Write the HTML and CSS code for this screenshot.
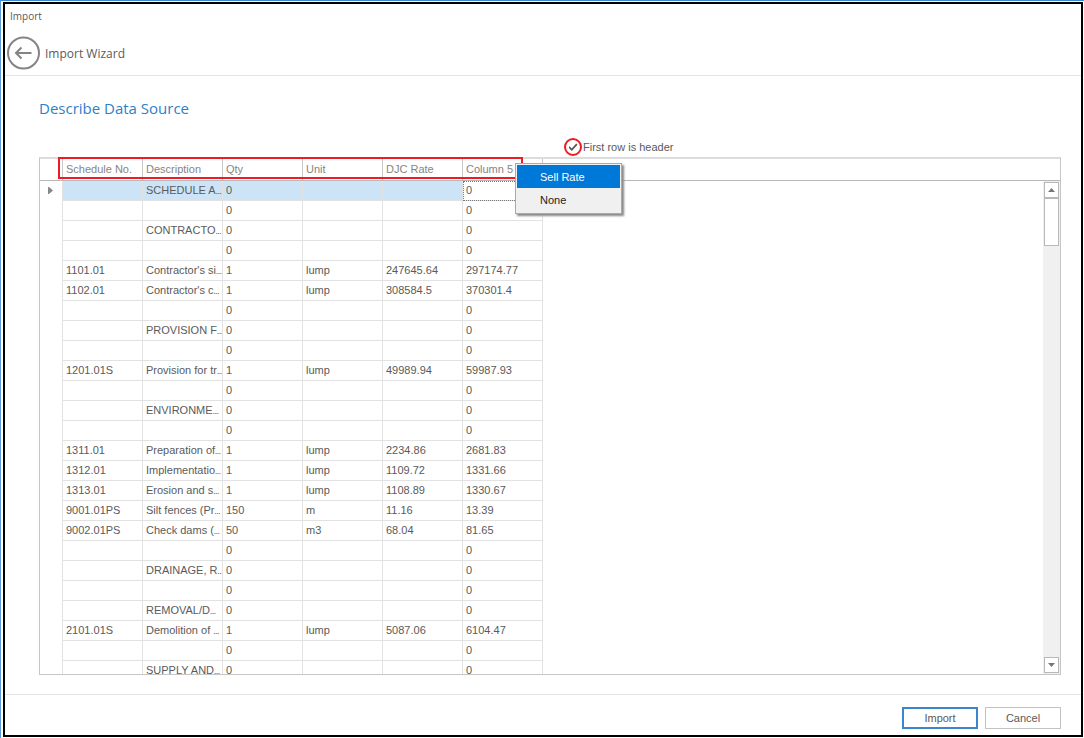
FILE: index.html
```html
<!DOCTYPE html>
<html lang="en">

<head>
    <meta charset="UTF-8" />
    <meta name="viewport" content="width=device-width, initial-scale=1" />
    <title>Import</title>
    <link rel="stylesheet" href="styles.css">
</head>

<body>
    <div class="dialog">
        <header class="titlebar">
            <div class="window-title">Import</div>
            <div class="wizard-bar">
                <button class="back" type="button" aria-label="Back">
                    <svg width="34" height="34" viewBox="0 0 34 34" fill="none" stroke="#848484">
                        <circle cx="16.5" cy="17" r="15.5" stroke-width="2" />
                        <path d="M24.5 17H9.5M14.5 11.5L9 17L14.5 22.5" stroke-width="2" />
                    </svg>
                </button>
                <span class="wizard-name">Import Wizard</span>
            </div>
        </header>

        <main class="content">
            <h1>Describe Data Source</h1>

            <div class="options">
                <span class="check-ring"><input type="checkbox" id="first-row" checked></span>
                <label for="first-row">First row is header</label>
            </div>

            <div class="grid">
                <table>
                    <colgroup>
                        <col class="col-mark">
                        <col class="col-data">
                        <col class="col-data">
                        <col class="col-data">
                        <col class="col-data">
                        <col class="col-data">
                        <col class="col-data">
                        <col>
                    </colgroup>
                    <thead>
                        <tr><th></th><th>Schedule No.</th><th>Description</th><th>Qty</th><th>Unit</th><th>DJC Rate</th><th>Column 5</th><th></th></tr>
                    </thead>
                    <tbody>
                        <tr class="selected"><td><svg class="marker" width="5" height="7" viewBox="0 0 5 7"><path d="M0 0H1L5 3.5L1 7H0Z" fill="#888" /></svg></td><td></td><td class="cut">SCHEDULE A</td><td>0</td><td></td><td></td><td class="focused">0</td><td></td></tr>
                        <tr><td></td><td></td><td></td><td>0</td><td></td><td></td><td>0</td><td></td></tr>
                        <tr><td></td><td></td><td class="cut">CONTRACTO</td><td>0</td><td></td><td></td><td>0</td><td></td></tr>
                        <tr><td></td><td></td><td></td><td>0</td><td></td><td></td><td>0</td><td></td></tr>
                        <tr><td></td><td>1101.01</td><td class="cut">Contractor's si</td><td>1</td><td>lump</td><td>247645.64</td><td>297174.77</td><td></td></tr>
                        <tr><td></td><td>1102.01</td><td class="cut">Contractor's c</td><td>1</td><td>lump</td><td>308584.5</td><td>370301.4</td><td></td></tr>
                        <tr><td></td><td></td><td></td><td>0</td><td></td><td></td><td>0</td><td></td></tr>
                        <tr><td></td><td></td><td class="cut">PROVISION F</td><td>0</td><td></td><td></td><td>0</td><td></td></tr>
                        <tr><td></td><td></td><td></td><td>0</td><td></td><td></td><td>0</td><td></td></tr>
                        <tr><td></td><td>1201.01S</td><td class="cut">Provision for tr</td><td>1</td><td>lump</td><td>49989.94</td><td>59987.93</td><td></td></tr>
                        <tr><td></td><td></td><td></td><td>0</td><td></td><td></td><td>0</td><td></td></tr>
                        <tr><td></td><td></td><td class="cut">ENVIRONME</td><td>0</td><td></td><td></td><td>0</td><td></td></tr>
                        <tr><td></td><td></td><td></td><td>0</td><td></td><td></td><td>0</td><td></td></tr>
                        <tr><td></td><td>1311.01</td><td class="cut">Preparation of</td><td>1</td><td>lump</td><td>2234.86</td><td>2681.83</td><td></td></tr>
                        <tr><td></td><td>1312.01</td><td class="cut">Implementatio</td><td>1</td><td>lump</td><td>1109.72</td><td>1331.66</td><td></td></tr>
                        <tr><td></td><td>1313.01</td><td class="cut">Erosion and s</td><td>1</td><td>lump</td><td>1108.89</td><td>1330.67</td><td></td></tr>
                        <tr><td></td><td>9001.01PS</td><td class="cut">Silt fences (Pr</td><td>150</td><td>m</td><td>11.16</td><td>13.39</td><td></td></tr>
                        <tr><td></td><td>9002.01PS</td><td class="cut">Check dams (</td><td>50</td><td>m3</td><td>68.04</td><td>81.65</td><td></td></tr>
                        <tr><td></td><td></td><td></td><td>0</td><td></td><td></td><td>0</td><td></td></tr>
                        <tr><td></td><td></td><td class="cut">DRAINAGE, R</td><td>0</td><td></td><td></td><td>0</td><td></td></tr>
                        <tr><td></td><td></td><td></td><td>0</td><td></td><td></td><td>0</td><td></td></tr>
                        <tr><td></td><td></td><td class="cut">REMOVAL/D</td><td>0</td><td></td><td></td><td>0</td><td></td></tr>
                        <tr><td></td><td>2101.01S</td><td class="cut">Demolition of </td><td>1</td><td>lump</td><td>5087.06</td><td>6104.47</td><td></td></tr>
                        <tr><td></td><td></td><td></td><td>0</td><td></td><td></td><td>0</td><td></td></tr>
                        <tr><td></td><td></td><td class="cut">SUPPLY AND</td><td>0</td><td></td><td></td><td>0</td><td></td></tr>
                    </tbody>
                </table>
                <div class="scrollbar">
                    <button type="button" aria-label="Scroll up"><svg width="7" height="4" viewBox="0 0 7 4"><path d="M0 4L3.5 0L7 4Z" fill="#777" /></svg></button>
                    <div class="thumb"></div>
                    <button class="down" type="button" aria-label="Scroll down"><svg width="7" height="4" viewBox="0 0 7 4"><path d="M0 0L3.5 4L7 0Z" fill="#777" /></svg></button>
                </div>
            </div>

            <div class="header-mark"></div>
            <div class="menu" role="menu">
                <button class="active" type="button" role="menuitem">Sell Rate</button>
                <button type="button" role="menuitem">None</button>
            </div>
        </main>

        <footer class="actions">
            <button class="primary" type="button">Import</button>
            <button type="button">Cancel</button>
        </footer>
    </div>
</body>

</html>
```

FILE: styles.css
```css
* {
    box-sizing: border-box;
}

body {
    display: flex;
    height: 100vh;
    min-height: 400px;
    margin: 0;
    padding: 1px 1px 1px 2px;
    border-top: 1px solid #3c87cc;
    border-left: 1px solid #5b9bd5;
    background: #fff;
    color: #5a5a5a;
    font-family: "Liberation Sans", Arial, sans-serif;
    font-size: 11px;
}

button {
    padding: 0;
    border: 0;
    border-radius: 0;
    background: none;
    color: inherit;
    font: inherit;
}

svg {
    display: block;
}

.dialog {
    flex: 1;
    display: flex;
    flex-direction: column;
    min-width: 0;
    border: 2px solid #000;
}

/* title and back button */
.titlebar {
    padding: 4px 2px 5px;
    border-bottom: 1px solid #e3e3e3;
    font-family: "Open Sans", "Segoe UI", sans-serif;
}

.window-title {
    padding-left: 3px;
    line-height: 16px;
    margin-bottom: 12px;
    font-size: 10px;
}

.wizard-bar {
    display: flex;
    align-items: center;
    gap: 4px;
}

.wizard-name {
    font-size: 12px;
}

/* data source page */
.content {
    position: relative;
    flex: 1;
    display: flex;
    flex-direction: column;
    min-height: 0;
    padding: 20px 20px 19px 34px;
}

h1 {
    margin: 0;
    color: #2e7fc8;
    font-family: "Open Sans", "Segoe UI", sans-serif;
    font-size: 15px;
    font-weight: 400;
    line-height: 24px;
}

.options {
    display: flex;
    align-items: center;
    gap: 1px;
    margin: 18px 0 1px;
    padding-left: 525px;
}

.check-ring {
    display: flex;
    align-items: center;
    justify-content: center;
    width: 18px;
    height: 18px;
    border: 2px solid #ed1c24;
    border-radius: 50%;
}

.check-ring input {
    appearance: none;
    display: flex;
    justify-content: center;
    width: 12px;
    height: 12px;
    margin: 0;
    padding-top: 2px;
}

.check-ring input:checked::before {
    content: '';
    width: 9px;
    height: 9px;
    background: #555;
    clip-path: polygon(0 50%, 12% 36%, 36% 62%, 86% 6%, 100% 20%, 36% 90%);
}

.grid {
    flex: 1;
    display: grid;
    grid-template: minmax(0, 1fr) / minmax(0, 1fr);
    min-height: 0;
    border: 1px solid #c6c6c6;
    border-top: 2px solid #dcdcdc;
    overflow: hidden;
}

.grid > * {
    grid-area: 1 / 1;
}

table {
    width: 100%;
    align-self: start;
    table-layout: fixed;
    border-collapse: separate;
    border-spacing: 0;
}

.col-mark {
    width: 23px;
}

.col-data {
    width: 80px;
}

th,
td {
    height: 20px;
    padding: 0 0 1px 3px;
    border-right: 1px solid #e2e2e2;
    border-bottom: 1px solid #e2e2e2;
    text-align: left;
    font-weight: 400;
    white-space: pre;
    overflow: hidden;
}

th {
    height: 22px;
    border-right-color: #c6c6c6;
    border-bottom-color: #b8b8b8;
    color: #858585;
}

td:first-child,
td:last-child {
    border-bottom: 0;
}

th:last-child,
td:last-child {
    border-right: 0;
}

.marker {
    margin-left: 5px;
}

/* compact ellipsis for clipped descriptions */
.cut::after {
    content: '…';
    font-size: 6px;
    font-weight: 700;
    color: #222;
}

.selected td:not(:first-child, :last-child) {
    background: #cde4f7;
}

.selected td.focused {
    background: #fff;
    outline: 1px dotted #777;
    outline-offset: -1px;
}

.scrollbar {
    justify-self: end;
    display: flex;
    flex-direction: column;
    width: 17px;
    margin-top: 22px;
    padding: 1px 1px 0;
    background: #f0f0f0;
}

.scrollbar button {
    display: flex;
    align-items: center;
    justify-content: center;
    height: 16px;
    border: 1px solid #b8b8b8;
    background: #fff;
}

.thumb {
    height: 48px;
    border: 1px solid #b8b8b8;
    background: #fff;
}

.scrollbar .down {
    margin: auto 0 1px;
}

/* overlays on the header row */
.header-mark {
    position: absolute;
    top: 81px;
    left: 53px;
    width: 465px;
    height: 22px;
    border: 2px solid #ed1c24;
}

.menu {
    position: absolute;
    top: 87px;
    left: 510px;
    width: 107px;
    padding: 1px 1px 2px;
    border: 1px solid #aaa;
    background: #f0f0f0;
    box-shadow: 2px 2px 2px #888;
    color: #222;
}

.menu button {
    display: block;
    width: 100%;
    height: 23px;
    padding-left: 23px;
    text-align: left;
}

.menu .active {
    background: #0078d7;
    color: #fff;
}

.actions {
    display: flex;
    justify-content: flex-end;
    gap: 7px;
    padding: 12px 20px 6px;
    border-top: 1px solid #e3e3e3;
}

.actions button {
    width: 76px;
    height: 22px;
    border: 1px solid #c3c3c3;
}

.actions .primary {
    border: 2px solid #3c87cc;
}
```
